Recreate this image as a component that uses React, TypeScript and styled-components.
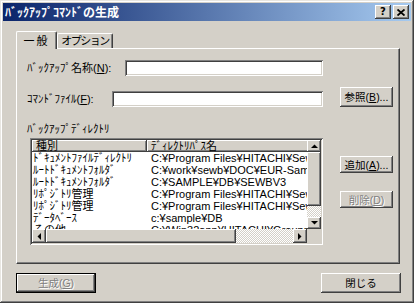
import React from 'react';
import styled, { createGlobalStyle, css } from 'styled-components';

const GlobalStyle = createGlobalStyle`
    html, body {
        margin: 0;
        padding: 0;
        background: #fff;
    }

    body {
        font-family: "Liberation Sans", "Noto Sans CJK JP", sans-serif;
        font-size: 11px;
        color: #000;
    }
`;

const raised = css`
    box-shadow: inset -1px -1px #404040, inset 1px 1px #fff, inset -2px -2px #808080, inset 2px 2px #d4d0c8;
`;

const sunken = css`
    box-shadow: inset 1px 1px #808080, inset -1px -1px #fff, inset 2px 2px #404040, inset -2px -2px #d4d0c8;
`;

const Window = styled.div`
    display: flex;
    flex-direction: column;
    box-sizing: border-box;
    width: 414px;
    height: 303px;
    padding: 3px;
    background: #d4d0c8;
    box-shadow: inset -1px -1px #404040, inset 1px 1px #e8e6e1, inset -2px -2px #808080, inset 2px 2px #fff;
`;

const TitleBar = styled.div`
    display: flex;
    align-items: center;
    justify-content: space-between;
    height: 18px;
    padding-left: 2px;
    background: linear-gradient(to right, #0a246a, #a6caf0);
`;

const Title = styled.span`
    color: #fff;
    font-family: "Noto Sans CJK JP", sans-serif;
    font-weight: bold;
    font-size: 12px;
    line-height: 18px;
`;

const CaptionButtons = styled.div`
    display: flex;
    gap: 2px;
    margin-right: 2px;
`;

const CaptionButton = styled.div`
    ${raised};
    display: flex;
    align-items: center;
    justify-content: center;
    width: 16px;
    height: 14px;
    background: #d4d0c8;
    font-family: "DejaVu Sans", sans-serif;
    font-weight: bold;
    font-size: 10px;
    line-height: 14px;
`;

const Body = styled.div`
    display: flex;
    flex-direction: column;
    padding: 10px 10px 0 13px;
`;

const TabStrip = styled.div`
    display: flex;
    align-items: flex-end;
    height: 17px;
    position: relative;
    z-index: 1;
`;

const Tab = styled.div<{ $active?: boolean; $width: number }>`
    display: flex;
    align-items: center;
    justify-content: center;
    box-sizing: border-box;
    width: ${(p) => p.$width}px;
    height: ${(p) => (p.$active ? 18 : 15)}px;
    margin-bottom: ${(p) => (p.$active ? -1 : 0)}px;
    background: #d4d0c8;
    border-top: 1px solid #fff;
    border-left: 1px solid #fff;
    border-right: 1px solid #404040;
    border-radius: 2px 2px 0 0;
    box-shadow: inset -1px 0 #808080;
    font-size: 11px;
    letter-spacing: ${(p) => (p.$active ? 2 : -1.5)}px;
    line-height: 12px;
`;

const Panel = styled.div`
    display: flex;
    flex-direction: column;
    box-sizing: border-box;
    width: 384px;
    height: 216px;
    padding: 11px 0 0 10px;
    border-top: 1px solid #fff;
    border-left: 1px solid #fff;
    border-right: 1px solid #404040;
    border-bottom: 1px solid #404040;
    box-shadow: inset -1px -1px #808080;
`;

const FieldRow = styled.div<{ $height: number; $gap?: number }>`
    display: flex;
    align-items: flex-end;
    height: ${(p) => p.$height}px;
    margin-top: ${(p) => p.$gap ?? 0}px;
`;

const Label = styled.label<{ $width?: number }>`
    width: ${(p) => (p.$width ? `${p.$width}px` : 'auto')};
    line-height: 16px;
    white-space: nowrap;
`;

const TextInput = styled.div<{ $width: number }>`
    ${sunken};
    box-sizing: border-box;
    width: ${(p) => p.$width}px;
    height: 16px;
    background: #fff;
`;

const Button = styled.div<{ $width: number; $height: number; $disabled?: boolean; $default?: boolean }>`
    ${raised};
    display: flex;
    align-items: center;
    justify-content: center;
    flex: none;
    box-sizing: border-box;
    width: ${(p) => p.$width}px;
    height: ${(p) => p.$height}px;
    background: #d4d0c8;
    font-size: 10.5px;
    line-height: 12px;
    white-space: nowrap;
    color: ${(p) => (p.$disabled ? '#808080' : '#000')};
    text-shadow: ${(p) => (p.$disabled ? '1px 1px #fff' : 'none')};
    ${(p) =>
        p.$default &&
        css`
            border: 1px solid #000;
        `}
`;

const BrowseButton = styled(Button)`
    margin-left: 17px;
`;

const GroupLabel = styled.div`
    margin-top: 16px;
    line-height: 12px;
`;

const ListArea = styled.div`
    display: flex;
    margin-top: 3px;
`;

const ListView = styled.div`
    ${sunken};
    display: grid;
    grid-template-columns: 275px 14px;
    grid-template-rows: 89px 14px;
    box-sizing: border-box;
    width: 293px;
    height: 107px;
    margin-left: 3px;
    padding: 2px;
    background: #fff;
`;

const Viewport = styled.div`
    overflow: hidden;
`;

const ListGrid = styled.div`
    display: grid;
    grid-template-columns: 115px 160px;
    grid-auto-rows: 12px;
`;

const HeaderCell = styled.div<{ $open?: boolean }>`
    ${raised};
    box-sizing: border-box;
    height: 12px;
    padding-left: 4px;
    background: #d4d0c8;
    line-height: 12px;
    white-space: nowrap;
    overflow: hidden;
    ${(p) =>
        p.$open &&
        css`
            box-shadow: inset 0 -1px #404040, inset 1px 1px #fff, inset 0 -2px #808080;
        `}
`;

const Cell = styled.div<{ $first?: boolean }>`
    padding-left: ${(p) => (p.$first ? 1 : 4)}px;
    line-height: 12px;
    white-space: nowrap;
    overflow: hidden;
`;

const dither = css`
    background: repeating-conic-gradient(#fff 0 25%, #d4d0c8 0 50%) 0 0 / 2px 2px;
`;

const VScroll = styled.div`
    ${dither};
    display: flex;
    flex-direction: column;
`;

const HScroll = styled.div`
    ${dither};
    display: flex;
`;

const ArrowButton = styled.div<{ $w: number; $h: number }>`
    ${raised};
    display: flex;
    align-items: center;
    justify-content: center;
    flex: none;
    width: ${(p) => p.$w}px;
    height: ${(p) => p.$h}px;
    background: #d4d0c8;
`;

const Thumb = styled.div<{ $w: number; $h: number }>`
    ${raised};
    flex: none;
    width: ${(p) => p.$w}px;
    height: ${(p) => p.$h}px;
    background: #d4d0c8;
`;

const Spacer = styled.div`
    flex: 1;
`;

const Corner = styled.div`
    background: #d4d0c8;
`;

const SideButtons = styled.div`
    display: flex;
    flex-direction: column;
    gap: 18px;
    margin-left: 17px;
    padding-top: 18px;
`;

const Footer = styled.div`
    display: flex;
    justify-content: space-between;
    margin-top: 9px;
`;

type Dir = 'up' | 'down' | 'left' | 'right';

const arrowPoints: Record<Dir, string> = {
    up: '0,4 3.5,0.5 7,4',
    down: '0,0 3.5,3.5 7,0',
    left: '4,0 0.5,3.5 4,7',
    right: '0,0 3.5,3.5 0,7',
};

const Arrow = ({ dir }: { dir: Dir }) => {
    const vertical = dir === 'up' || dir === 'down';
    return (
        <svg width={vertical ? 7 : 4} height={vertical ? 4 : 7} viewBox={vertical ? '0 0 7 4' : '0 0 4 7'}>
            <polygon points={arrowPoints[dir]} fill="#000" />
        </svg>
    );
};

const rows = [
    ['ﾄﾞｷｭﾒﾝﾄﾌｧｲﾙﾃﾞｨﾚｸﾄﾘ', 'C:¥Program Files¥HITACHI¥Sewb'],
    ['ﾙｰﾄﾄﾞｷｭﾒﾝﾄﾌｫﾙﾀﾞ', 'C:¥work¥sewb¥DOC¥EUR-Sample'],
    ['ﾙｰﾄﾄﾞｷｭﾒﾝﾄﾌｫﾙﾀﾞ', 'C:¥SAMPLE¥DB¥SEWBV3'],
    ['ﾘﾎﾟｼﾞﾄﾘ管理', 'C:¥Program Files¥HITACHI¥Sewb'],
    ['ﾘﾎﾟｼﾞﾄﾘ管理', 'C:¥Program Files¥HITACHI¥Sewb'],
    ['ﾃﾞｰﾀﾍﾞｰｽ', 'c:¥sample¥DB'],
    ['その他', 'C:¥Win32app¥HITACHI¥Groupmax'],
];

const App = () => {
    return (
        <>
            <GlobalStyle />
            <Window>
                <TitleBar>
                    <Title>ﾊﾞｯｸｱｯﾌﾟｺﾏﾝﾄﾞの生成</Title>
                    <CaptionButtons>
                        <CaptionButton>?</CaptionButton>
                        <CaptionButton>
                            <svg width="8" height="7" viewBox="0 0 8 7">
                                <path d="M0.5 0.5 L7.5 6.5 M7.5 0.5 L0.5 6.5" stroke="#000" strokeWidth="1.8" />
                            </svg>
                        </CaptionButton>
                    </CaptionButtons>
                </TitleBar>
                <Body>
                    <TabStrip>
                        <Tab $active $width={41}>
                            一般
                        </Tab>
                        <Tab $width={56}>オプション</Tab>
                    </TabStrip>
                    <Panel>
                        <FieldRow $height={16}>
                            <Label $width={98}>
                                ﾊﾞｯｸｱｯﾌﾟ名称(<u>N</u>):
                            </Label>
                            <TextInput $width={198} />
                        </FieldRow>
                        <FieldRow $height={20} $gap={11}>
                            <Label $width={85}>
                                ｺﾏﾝﾄﾞﾌｧｲﾙ(<u>F</u>):
                            </Label>
                            <TextInput $width={211} />
                            <BrowseButton $width={53} $height={20}>
                                参照(<u>B</u>)...
                            </BrowseButton>
                        </FieldRow>
                        <GroupLabel>ﾊﾞｯｸｱｯﾌﾟﾃﾞｨﾚｸﾄﾘ</GroupLabel>
                        <ListArea>
                            <ListView>
                                <Viewport>
                                    <ListGrid>
                                        <HeaderCell>種別</HeaderCell>
                                        <HeaderCell $open>ﾃﾞｨﾚｸﾄﾘﾊﾟｽ名</HeaderCell>
                                        {rows.map(([kind, path], i) => (
                                            <React.Fragment key={i}>
                                                <Cell $first>{kind}</Cell>
                                                <Cell>{path}</Cell>
                                            </React.Fragment>
                                        ))}
                                    </ListGrid>
                                </Viewport>
                                <VScroll>
                                    <ArrowButton $w={14} $h={12}>
                                        <Arrow dir="up" />
                                    </ArrowButton>
                                    <Thumb $w={14} $h={54} />
                                    <Spacer />
                                    <ArrowButton $w={14} $h={12}>
                                        <Arrow dir="down" />
                                    </ArrowButton>
                                </VScroll>
                                <HScroll>
                                    <ArrowButton $w={14} $h={14}>
                                        <Arrow dir="left" />
                                    </ArrowButton>
                                    <Thumb $w={190} $h={14} />
                                    <Spacer />
                                    <ArrowButton $w={14} $h={14}>
                                        <Arrow dir="right" />
                                    </ArrowButton>
                                </HScroll>
                                <Corner />
                            </ListView>
                            <SideButtons>
                                <Button $width={53} $height={17}>
                                    追加(<u>A</u>)...
                                </Button>
                                <Button $width={53} $height={17} $disabled>
                                    削除(<u>D</u>)
                                </Button>
                            </SideButtons>
                        </ListArea>
                    </Panel>
                    <Footer>
                        <Button $width={80} $height={20} $disabled $default>
                            生成(<u>G</u>)
                        </Button>
                        <Button $width={80} $height={20}>
                            閉じる
                        </Button>
                    </Footer>
                </Body>
            </Window>
        </>
    );
};

export default App;
